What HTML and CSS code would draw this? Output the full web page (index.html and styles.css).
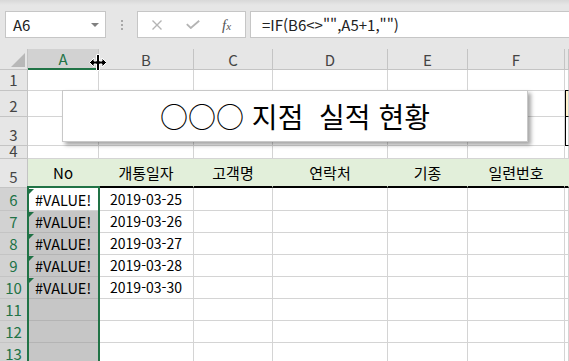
FILE: index.html
```html
<!DOCTYPE html>
<html lang="ko">
<head>
  <meta charset="UTF-8">
  <title>실적 현황 - Excel</title>
  <link rel="stylesheet" href="styles.css">
</head>
<body>
  <div class="page">
    <div class="toolbar">
      <div class="name-box">A6<span class="arrow"></span></div>
      <div class="grip"></div>
      <div class="buttons">
        <svg class="btn-cancel" width="12" height="10" viewBox="0 0 12 10"><path d="M1.5 0.5 L10.5 9.5 M10.5 0.5 L1.5 9.5" stroke="#b4b4b4" stroke-width="1.4" fill="none"/></svg>
        <svg class="btn-enter" width="14" height="9" viewBox="0 0 14 9"><path d="M0.8 4.2 L4.8 8 L13.2 0.8" stroke="#b4b4b4" stroke-width="1.8" fill="none"/></svg>
        <span class="btn-fx"><i>f</i><small>x</small></span>
      </div>
      <div class="formula">=IF(B6&lt;&gt;"",A5+1,"")</div>
    </div>

    <div class="sheet">
      <!-- column headers -->
      <div class="c corner"></div>
      <div class="c ch sel">A</div>
      <div class="c ch">B</div>
      <div class="c ch">C</div>
      <div class="c ch">D</div>
      <div class="c ch">E</div>
      <div class="c ch">F</div>
      <div class="c ch"></div>

      <!-- 1 -->
      <div class="c rh">1</div>
      <div class="c"></div><div class="c"></div><div class="c"></div><div class="c"></div><div class="c"></div><div class="c"></div>
      <div class="c note-above"></div>

      <!-- 2 -->
      <div class="c rh">2</div>
      <div class="c"></div><div class="c"></div><div class="c"></div><div class="c"></div><div class="c"></div><div class="c"></div>
      <div class="c note note-fill"></div>

      <!-- 3 -->
      <div class="c rh">3</div>
      <div class="c"></div><div class="c"></div><div class="c"></div><div class="c"></div><div class="c"></div><div class="c"></div>
      <div class="c note"></div>

      <!-- 4 -->
      <div class="c rh short">4</div>
      <div class="c"></div><div class="c"></div><div class="c"></div><div class="c"></div><div class="c"></div><div class="c"></div>
      <div class="c"></div>

      <!-- 5 -->
      <div class="c rh">5</div>
      <div class="c head">No</div>
      <div class="c head">개통일자</div>
      <div class="c head">고객명</div>
      <div class="c head">연락처</div>
      <div class="c head">기종</div>
      <div class="c head">일련번호</div>
      <div class="c head"></div>

      <!-- 6 -->
      <div class="c rh sel">6</div>
      <div class="c num err">#VALUE!</div>
      <div class="c date">2019-03-25</div>
      <div class="c"></div><div class="c"></div><div class="c"></div><div class="c"></div><div class="c"></div>

      <!-- 7 -->
      <div class="c rh sel">7</div>
      <div class="c num err picked">#VALUE!</div>
      <div class="c date">2019-03-26</div>
      <div class="c"></div><div class="c"></div><div class="c"></div><div class="c"></div><div class="c"></div>

      <!-- 8 -->
      <div class="c rh sel">8</div>
      <div class="c num err picked">#VALUE!</div>
      <div class="c date">2019-03-27</div>
      <div class="c"></div><div class="c"></div><div class="c"></div><div class="c"></div><div class="c"></div>

      <!-- 9 -->
      <div class="c rh sel">9</div>
      <div class="c num err picked">#VALUE!</div>
      <div class="c date">2019-03-28</div>
      <div class="c"></div><div class="c"></div><div class="c"></div><div class="c"></div><div class="c"></div>

      <!-- 10 -->
      <div class="c rh sel">10</div>
      <div class="c num err picked">#VALUE!</div>
      <div class="c date">2019-03-30</div>
      <div class="c"></div><div class="c"></div><div class="c"></div><div class="c"></div><div class="c"></div>

      <!-- 11 -->
      <div class="c rh sel">11</div>
      <div class="c picked"></div>
      <div class="c"></div><div class="c"></div><div class="c"></div><div class="c"></div><div class="c"></div><div class="c"></div>

      <!-- 12 -->
      <div class="c rh sel">12</div>
      <div class="c picked"></div>
      <div class="c"></div><div class="c"></div><div class="c"></div><div class="c"></div><div class="c"></div><div class="c"></div>

      <!-- 13 -->
      <div class="c rh sel">13</div>
      <div class="c picked"></div>
      <div class="c"></div><div class="c"></div><div class="c"></div><div class="c"></div><div class="c"></div><div class="c"></div>
    </div>

    <!-- floating title shape -->
    <div class="title">○○○ 지점  실적 현황</div>

    <!-- selection range A6:A13 -->
    <div class="selection"></div>

    <!-- column resize cursor -->
    <svg class="cursor" width="18" height="18" viewBox="0 0 18 18">
      <path d="M0.5 8.5 L5 4 V7 H7.5 V0.5 H10.5 V7 H13 V4 L17.5 8.5 L13 13 V10 H10.5 V16.5 H7.5 V10 H5 V13 Z" fill="#000" stroke="#fff" stroke-width="1"/>
    </svg>
  </div>
</body>
</html>
```

FILE: styles.css
```css
* {
  box-sizing: border-box;
}

body {
  margin: 0;
  width: 569px;
  height: 361px;
  overflow: hidden;
  font-family: "Noto Sans CJK KR", "Noto Sans", sans-serif;
  background-color: #fff;
  color: #000;
}

.page {
  position: relative;
  height: 361px;
  overflow: hidden;
}

/* Formula bar */
.toolbar {
  display: flex;
  align-items: flex-start;
  height: 49px;
  padding: 11px 0 0 5px;
  background: linear-gradient(#d8d8d8, #e6e6e6 5px);
}

.name-box {
  display: flex;
  align-items: center;
  width: 101px;
  height: 27px;
  padding-left: 7px;
  background-color: #fff;
  border: 1px solid #c6c6c6;
  font-size: 15px;
  color: #222;
}

.name-box .arrow {
  margin-left: auto;
  margin-right: 6px;
  border-left: 4px solid transparent;
  border-right: 4px solid transparent;
  border-top: 4px solid #808080;
}

.grip {
  width: 2px;
  height: 10px;
  margin: 9px 14px 0 15px;
  background: repeating-linear-gradient(#a8a8a8 0 2px, transparent 2px 4px);
}

.buttons {
  display: flex;
  align-items: center;
  width: 109px;
  height: 27px;
  padding-left: 13px;
  background-color: #fff;
  border: 1px solid #c6c6c6;
}

.btn-enter {
  margin-left: 23px;
}

.btn-fx {
  margin-left: 22px;
  font-family: "Liberation Serif", serif;
  color: #555;
  line-height: 1;
}

.btn-fx i {
  font-size: 15px;
}

.btn-fx small {
  font-size: 11px;
  font-style: italic;
}

.formula {
  flex: 1;
  display: flex;
  align-items: center;
  height: 27px;
  margin-left: 4px;
  padding-left: 11px;
  background-color: #fff;
  border: 1px solid #c6c6c6;
  border-right: none;
  font-size: 15px;
  color: #222;
  white-space: nowrap;
}

/* Grid */
.sheet {
  display: grid;
  grid-template-columns: 28px 71px 95px 79px 115px 80px 97px 4px;
  grid-template-rows: 21px 21px 26px 29px 13px 29px 23px repeat(7, 22px);
}

.c {
  position: relative;
  display: flex;
  align-items: flex-end;
  border-right: 1px solid #d4d4d4;
  border-bottom: 1px solid #d4d4d4;
  font-size: 15px;
  line-height: 19px;
  padding-bottom: 1px;
  white-space: nowrap;
}

.corner,
.ch,
.rh {
  background-color: #e6e6e6;
  border-color: #c4c4c4;
  color: #444;
  justify-content: center;
}

.corner::after {
  content: "";
  position: absolute;
  right: 2px;
  bottom: 2px;
  border-left: 14px solid transparent;
  border-bottom: 14px solid #b8b8b8;
}

.ch {
  align-items: center;
  padding-bottom: 0;
}

.ch.sel {
  background-color: #d2d2d2;
  color: #217346;
  border-bottom: 2px solid #217346;
}

.rh.short {
  line-height: 15px;
  padding-bottom: 0;
}

.rh.sel {
  background-color: #d2d2d2;
  color: #217346;
}

.head {
  align-items: center;
  justify-content: center;
  padding-bottom: 0;
  background-color: #e2efda;
  border-right-color: #e2efda;
  border-bottom: 2px solid #000;
}

.num {
  padding-left: 7px;
  font-size: 14.5px;
}

.date {
  justify-content: center;
  font-size: 14px;
}

.picked {
  background-color: #c6c6c6;
  border-bottom-color: #b4b4b4;
}

/* error indicator */
.err::before {
  content: "";
  position: absolute;
  left: 1px;
  top: 1px;
  border-top: 5px solid #1f7145;
  border-right: 5px solid transparent;
}

/* cells beside the shape */
.note-above {
  border-bottom-color: #000;
}

.note {
  border-left: 1px solid #000;
  border-bottom-color: #000;
}

.note-fill {
  background-color: #fff2cc;
}

/* Floating title */
.title {
  position: absolute;
  left: 62px;
  top: 90px;
  width: 466px;
  height: 52px;
  display: flex;
  align-items: center;
  justify-content: center;
  background-color: #fff;
  border: 1px solid #c8c8c8;
  box-shadow: 3px 3px 4px rgba(0, 0, 0, 0.35);
  font-size: 28px;
  white-space: pre;
}

.selection {
  position: absolute;
  left: 27px;
  top: 186px;
  width: 73px;
  height: 200px;
  border: 2px solid #217346;
}

.cursor {
  position: absolute;
  left: 89px;
  top: 54px;
}
```
